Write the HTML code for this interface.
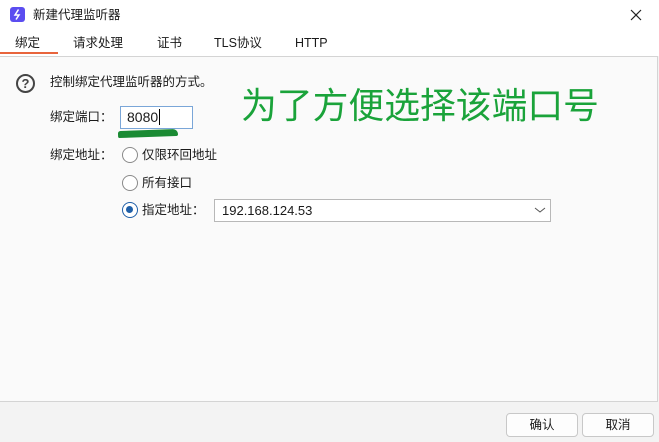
<!DOCTYPE html>
<html><head><meta charset="utf-8"><style>
*{margin:0;padding:0;box-sizing:border-box}
body{width:659px;height:442px;background:#f3f3f3;font-family:"Liberation Sans","Noto Sans CJK SC",sans-serif;font-size:12.5px;color:#1a1a1a;position:relative;overflow:hidden}
.a{position:absolute;white-space:nowrap;line-height:16px}
.radio{position:absolute;width:16px;height:16px;border:1px solid #8a8a8a;border-radius:50%;background:#fff}
.btn{position:absolute;top:413px;width:72px;height:24px;border:1px solid #c8c8c8;border-radius:4px;background:#fdfdfd;text-align:center;line-height:22px}
</style></head><body>
<div class="a" style="left:0;top:0;width:659px;height:30px;background:#fff"></div>
<div class="a" style="left:10px;top:7px;width:15px;height:15px;background:#5b4df0;border-radius:3px"><svg width="15" height="15"><path d="M8.5 2.5 5 8h4l-3 4.5" stroke="#fff" stroke-width="1.5" fill="none"/></svg></div>
<div class="a" style="left:33px;top:7px">新建代理监听器</div>
<svg class="a" style="left:630px;top:9px" width="12" height="12"><path d="M1 1l10 10M11 1 1 11" stroke="#222" stroke-width="1.2"/></svg>
<div class="a" style="left:0;top:30px;width:659px;height:26px;background:#fff"></div>
<div class="a" style="left:15px;top:35px">绑定</div>
<div class="a" style="left:73px;top:35px">请求处理</div>
<div class="a" style="left:157px;top:35px">证书</div>
<div class="a" style="left:214px;top:35px">TLS协议</div>
<div class="a" style="left:295px;top:35px">HTTP</div>
<div class="a" style="left:0;top:52px;width:58px;height:2px;background:#e8643c"></div>
<div class="a" style="left:0;top:56px;width:658px;height:346px;background:#fafafa;border:1px solid #d4d4d4;border-left:none"></div>
<div class="a" style="left:16px;top:74px;width:19px;height:19px;border:2px solid #444;border-radius:50%;text-align:center;line-height:15px;font-size:13px;font-weight:bold;color:#444">?</div>
<div class="a" style="left:50px;top:74px">控制绑定代理监听器的方式。</div>
<div class="a" style="left:241px;top:86px;font-size:35.8px;line-height:40px;color:#1aa33a">为了方便选择该端口号</div>
<div class="a" style="left:50px;top:109px">绑定端口：</div>
<div class="a" style="left:120px;top:106px;width:73px;height:23px;border:1px solid #7aa6d8;background:#fff;padding-left:6px;line-height:21px;font-size:14px">8080<span style="border-left:1px solid #000;margin-left:1px"></span></div>
<div class="a" style="left:118px;top:130px;width:60px;height:7px;background:#1a8a33;border-radius:4px 8px 3px 2px;transform:rotate(-2deg)"></div>
<div class="a" style="left:50px;top:147px">绑定地址：</div>
<div class="radio" style="left:122px;top:147px"></div>
<div class="a" style="left:142px;top:147px">仅限环回地址</div>
<div class="radio" style="left:122px;top:175px"></div>
<div class="a" style="left:142px;top:175px">所有接口</div>
<div class="radio" style="left:122px;top:202px;border:1.5px solid #1f5fa8"><div style="position:absolute;left:3px;top:3px;width:7px;height:7px;border-radius:50%;background:#1f5fa8"></div></div>
<div class="a" style="left:142px;top:202px">指定地址：</div>
<div class="a" style="left:214px;top:199px;width:337px;height:23px;border:1px solid #b8b8b8;background:#fff;padding-left:7px;line-height:21px;font-size:13px">192.168.124.53</div>
<svg class="a" style="left:534px;top:206px" width="12" height="8"><path d="M1 2l5 4 5-4" stroke="#555" fill="none"/></svg>
<div class="btn" style="left:506px">确认</div>
<div class="btn" style="left:582px">取消</div>
</body></html>
